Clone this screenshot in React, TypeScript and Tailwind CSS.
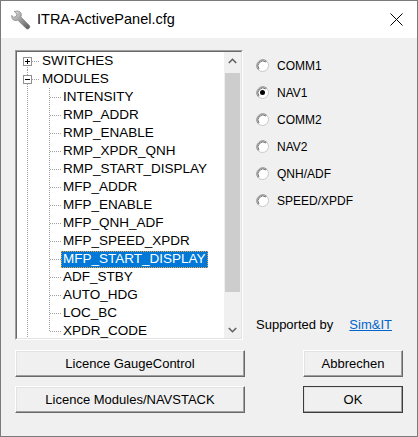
import React from "react";

const FONT = { fontFamily: '"Liberation Sans", Arial, sans-serif' };

type TreeItem = { label: string; kind: "root" | "child"; expanded?: boolean; last?: boolean; selected?: boolean };

const items: TreeItem[] = [
  { label: "SWITCHES", kind: "root", expanded: false },
  { label: "MODULES", kind: "root", expanded: true },
  { label: "INTENSITY", kind: "child" },
  { label: "RMP_ADDR", kind: "child" },
  { label: "RMP_ENABLE", kind: "child" },
  { label: "RMP_XPDR_QNH", kind: "child" },
  { label: "RMP_START_DISPLAY", kind: "child" },
  { label: "MFP_ADDR", kind: "child" },
  { label: "MFP_ENABLE", kind: "child" },
  { label: "MFP_QNH_ADF", kind: "child" },
  { label: "MFP_SPEED_XPDR", kind: "child" },
  { label: "MFP_START_DISPLAY", kind: "child", selected: true },
  { label: "ADF_STBY", kind: "child" },
  { label: "AUTO_HDG", kind: "child" },
  { label: "LOC_BC", kind: "child" },
  { label: "XPDR_CODE", kind: "child", last: true },
];

const radios = ["COMM1", "NAV1", "COMM2", "NAV2", "QNH/ADF", "SPEED/XPDF"];

function Guides({ item, first }: { item: TreeItem; first: boolean }) {
  const dot = { stroke: "#a0a0a0", strokeWidth: 1, strokeDasharray: "1 1" };
  if (item.kind === "root") {
    return (
      <svg width="23" height="18" className="shrink-0">
        <line x1="10.5" y1={first ? 13 : 0} x2="10.5" y2="18" {...dot} />
        <line x1="15" y1="9.5" x2="22" y2="9.5" {...dot} />
        <rect x="6.5" y="5.5" width="8" height="8" fill="#fff" stroke="#919191" />
        <line x1="8" y1="9.5" x2="13" y2="9.5" stroke="#000" />
        {!item.expanded && <line x1="10.5" y1="7" x2="10.5" y2="12" stroke="#000" />}
      </svg>
    );
  }
  return (
    <svg width="44" height="18" className="shrink-0">
      <line x1="10.5" y1="0" x2="10.5" y2="18" {...dot} />
      <line x1="32.5" y1="0" x2="32.5" y2={item.last ? 10 : 18} {...dot} />
      <line x1="33" y1="9.5" x2="44" y2="9.5" {...dot} />
    </svg>
  );
}

function Radio({ label, checked }: { label: string; checked?: boolean }) {
  return (
    <div className="flex items-center h-[13px]">
      <svg width="13" height="13" className="shrink-0">
        <circle cx="6.5" cy="6.5" r="6" fill="#fff" stroke="#c8c8c8" />
        <path d="M 2.3 10.7 A 6 6 0 0 1 10.7 2.3" fill="none" stroke="#8a8a8a" />
        <path d="M 3 10 A 5 5 0 0 1 10 3" fill="none" stroke="#505050" strokeWidth="0.8" />
        {checked && <circle cx="6.5" cy="6.5" r="2.5" fill="#000" />}
      </svg>
      <span className="ml-[8px] text-[12px] text-black leading-none">{label}</span>
    </div>
  );
}

function Button({ children, width, isDefault }: { children: React.ReactNode; width: string; isDefault?: boolean }) {
  return (
    <button
      className={`${width} h-[27px] bg-[#f0f0f0] text-[13px] text-black border ${
        isDefault ? "border-[#3c3c3c]" : "border-t-white border-l-white border-r-[#696969] border-b-[#696969]"
      } shadow-[inset_-1px_-1px_0_#a0a0a0,inset_1px_1px_0_#e3e3e3] flex items-center justify-center`}
    >
      {children}
    </button>
  );
}

export default function App() {
  return (
    <div className="w-[418px] h-[437px] flex flex-col border border-[#7a7a7a] bg-[#f0f0f0]" style={FONT}>
      {/* title bar */}
      <div className="h-[37px] bg-white flex items-center shrink-0">
        <svg width="20" height="20" viewBox="0 0 20 20" className="ml-[10px]">
          <defs>
            <linearGradient id="wr" x1="0" y1="0" x2="1" y2="1">
              <stop offset="0" stopColor="#e6e6e6" />
              <stop offset="0.5" stopColor="#9a9a9a" />
              <stop offset="1" stopColor="#5a5a5a" />
            </linearGradient>
          </defs>
          <path
            d="M3.2 1.5 L6 4.3 L5 6.5 L2.8 7.4 L0.8 5.4 C0.4 7.5 1.2 9.6 3.3 10.3 C4.6 10.7 5.8 10.5 6.7 10 L15.2 18.5 C15.9 19.2 17.1 19.2 17.8 18.5 L18.3 18 C19 17.3 19 16.1 18.3 15.4 L9.8 6.9 C10.4 5.8 10.5 4.5 10 3.3 C9.2 1.3 6.3 0.3 3.2 1.5 Z"
            fill="url(#wr)"
            stroke="#6a6a6a"
            strokeWidth="0.6"
          />
        </svg>
        <span className="ml-[6px] text-[14.5px] text-black">ITRA-ActivePanel.cfg</span>
        <svg width="13" height="13" viewBox="0 0 13 13" className="ml-auto mr-[14px]">
          <path d="M0.5 0.5 L12.5 12.5 M12.5 0.5 L0.5 12.5" stroke="#000" strokeWidth="1" />
        </svg>
      </div>

      {/* client area */}
      <div className="flex-1 flex flex-col pl-[14px] pr-[14px] pt-[12px]">
        <div className="flex h-[290px]">
          {/* tree view */}
          <div className="w-[228px] h-[290px] border border-t-[#a0a0a0] border-l-[#a0a0a0] border-r-white border-b-white shrink-0">
            <div className="w-full h-full border border-t-[#696969] border-l-[#696969] border-r-[#e3e3e3] border-b-[#e3e3e3] bg-white flex overflow-hidden">
              <div className="flex-1 flex flex-col overflow-hidden">
                {items.map((item, i) => (
                  <div key={item.label} className="flex items-center h-[18px] shrink-0">
                    <Guides item={item} first={i === 0} />
                    <span
                      className={`px-[2px] h-[17px] flex items-center text-[13.5px] leading-none whitespace-nowrap ${
                        item.selected
                          ? "bg-[#0078d7] text-white outline outline-1 outline-dotted outline-[#f0a040] -outline-offset-1"
                          : "text-black"
                      }`}
                    >
                      {item.label}
                    </span>
                  </div>
                ))}
              </div>
              {/* scrollbar */}
              <div className="w-[17px] shrink-0 bg-[#f0f0f0] flex flex-col">
                <div className="h-[17px] flex items-center justify-center">
                  <svg width="9" height="6" viewBox="0 0 9 6">
                    <path d="M0.8 5 L4.5 1.3 L8.2 5" fill="none" stroke="#606060" strokeWidth="1.6" />
                  </svg>
                </div>
                <div className="flex-1 flex flex-col px-[1px] pt-[4px]">
                  <div className="h-[219px] bg-[#cdcdcd]" />
                </div>
                <div className="h-[17px] flex items-center justify-center">
                  <svg width="9" height="6" viewBox="0 0 9 6">
                    <path d="M0.8 1 L4.5 4.7 L8.2 1" fill="none" stroke="#606060" strokeWidth="1.6" />
                  </svg>
                </div>
              </div>
            </div>
          </div>

          {/* right panel */}
          <div className="flex-1 flex flex-col pl-[13px]">
            <div className="flex flex-col gap-[14px] mt-[9px]">
              {radios.map((r) => (
                <Radio key={r} label={r} checked={r === "NAV1"} />
              ))}
            </div>
            <div className="mt-auto mb-[8px] flex items-center text-[13px] leading-[15px]">
              <span className="text-black">Supported by</span>
              <span className="ml-[16px] text-[#0066cc] underline">Sim&amp;IT</span>
            </div>
          </div>
        </div>

        {/* buttons */}
        <div className="flex justify-between mt-[10px]">
          <Button width="w-[230px]">Licence GaugeControl</Button>
          <Button width="w-[100px]">Abbrechen</Button>
        </div>
        <div className="flex justify-between mt-[9px]">
          <Button width="w-[230px]">Licence Modules/NAVSTACK</Button>
          <Button width="w-[100px]" isDefault>
            OK
          </Button>
        </div>
      </div>
    </div>
  );
}
